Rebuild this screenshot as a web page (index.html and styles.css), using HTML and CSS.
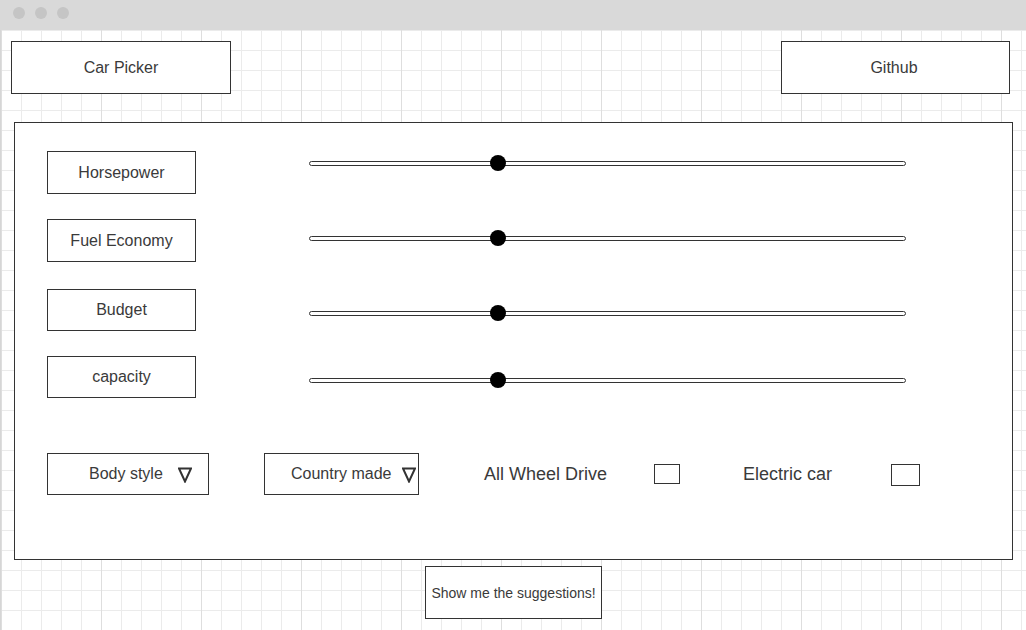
FILE: index.html
```html
<!DOCTYPE html>
<html lang="en">
<head>
<meta charset="utf-8">
<title>Car Picker</title>
<link rel="stylesheet" href="styles.css">
</head>
<body>
<div class="titlebar">
  <span class="dot"></span><span class="dot"></span><span class="dot"></span>
</div>
<main class="canvas">
  <header class="header">
    <div class="box box--brand">Car Picker</div>
    <div class="box box--github">Github</div>
  </header>

  <section class="panel">
    <div class="row row--hp">
      <div class="label">Horsepower</div>
      <div class="slider"><div class="track"></div><div class="thumb"></div></div>
    </div>
    <div class="row row--fuel">
      <div class="label">Fuel Economy</div>
      <div class="slider"><div class="track"></div><div class="thumb"></div></div>
    </div>
    <div class="row row--budget">
      <div class="label">Budget</div>
      <div class="slider"><div class="track"></div><div class="thumb"></div></div>
    </div>
    <div class="row row--capacity">
      <div class="label">capacity</div>
      <div class="slider"><div class="track"></div><div class="thumb"></div></div>
    </div>

    <div class="options">
      <div class="dropdown dropdown--body">
        <span>Body style</span>
        <svg class="tri" width="14" height="16" viewBox="0 0 14 16"><polygon points="1,1.5 13,1.5 7,14.5" fill="none" stroke="#333" stroke-width="2" stroke-linejoin="miter"/></svg>
      </div>
      <div class="dropdown dropdown--country">
        <span>Country made</span>
        <svg class="tri" width="14" height="16" viewBox="0 0 14 16"><polygon points="1,1.5 13,1.5 7,14.5" fill="none" stroke="#333" stroke-width="2" stroke-linejoin="miter"/></svg>
      </div>
      <div class="check check--awd">
        <span class="check-label">All Wheel Drive</span>
        <span class="checkbox"></span>
      </div>
      <div class="check check--electric">
        <span class="check-label">Electric car</span>
        <span class="checkbox"></span>
      </div>
    </div>
  </section>

  <div class="actions">
    <div class="box box--submit">Show me the suggestions!</div>
  </div>
</main>
</body>
</html>
```

FILE: styles.css
```css
* { box-sizing: border-box; }

html, body {
  margin: 0;
  padding: 0;
  background: #fff;
}

body {
  width: 1026px;
  height: 630px;
  overflow: hidden;
  font-family: "Liberation Sans", Arial, sans-serif;
  color: #3a3a3a;
}

.titlebar {
  height: 30px;
  background: #d9d9d9;
  display: flex;
  align-items: center;
  gap: 10px;
  padding: 0 0 4px 13px;
}

.dot {
  width: 12px;
  height: 12px;
  border-radius: 50%;
  background: #c5c5c5;
}

.canvas {
  height: 600px;
  border-left: 1px solid #d6d6d6;
  padding: 11px 16px 0 10px;
  background-color: #fff;
  background-image:
    linear-gradient(to right, #dedede 1px, transparent 1px),
    linear-gradient(to right, #ebebeb 1px, transparent 1px),
    linear-gradient(to bottom, #ebebeb 1px, transparent 1px);
  background-size: 100px 100%, 20px 20px, 20px 20px;
  background-position: 0 0, 0 0, 0 0;
}

.header {
  display: flex;
  justify-content: space-between;
}

.box {
  display: flex;
  align-items: center;
  justify-content: center;
  border: 1px solid #333;
  background: #fff;
  font-size: 16px;
}

.box--brand { width: 220px; height: 53px; }
.box--github { width: 229px; height: 53px; padding-right: 3px; }

.panel {
  width: 999px;
  height: 438px;
  margin: 28px 0 0 3px;
  border: 1px solid #333;
  background: #fff;
  padding: 28px 32px 0;
}

.row {
  display: flex;
  align-items: flex-start;
}

.row--fuel { margin-top: 25px; }
.row--budget { margin-top: 27px; }
.row--capacity { margin-top: 25px; }

.label {
  width: 149px;
  height: 43px;
  border: 1px solid #333;
  display: flex;
  align-items: center;
  justify-content: center;
  font-size: 16px;
}

.row--budget .label,
.row--capacity .label { height: 42px; }

.slider {
  position: relative;
  width: 597px;
  height: 16px;
  margin-left: 113px;
  display: flex;
  align-items: center;
}

.row--hp .slider { margin-top: 4px; }
.row--fuel .slider { margin-top: 11px; }
.row--budget .slider { margin-top: 16px; }
.row--capacity .slider { margin-top: 16px; }

.track {
  width: 100%;
  height: 5px;
  border: 1px solid #333;
  border-radius: 3px;
  background: #fff;
}

.thumb {
  position: absolute;
  left: 181px;
  top: 0;
  width: 16px;
  height: 16px;
  border-radius: 50%;
  background: #000;
}

.options {
  display: flex;
  align-items: center;
  margin-top: 55px;
  height: 42px;
}

.dropdown {
  height: 42px;
  border: 1px solid #333;
  display: flex;
  align-items: center;
  font-size: 16px;
}

.dropdown--body {
  width: 162px;
  padding-left: 41px;
  gap: 15px;
}

.dropdown--country {
  width: 155px;
  margin-left: 55px;
  padding-left: 26px;
  gap: 10px;
}

.tri { flex: none; margin-top: 1px; }

.check {
  display: flex;
  align-items: center;
  font-size: 18px;
}

.check--awd { margin-left: 65px; }
.check--awd .check-label { width: 170px; }
.check--electric { margin-left: 63px; }
.check--electric .check-label { width: 148px; }

.checkbox {
  display: block;
  border: 1px solid #333;
  background: #fff;
}

.check--awd .checkbox { width: 26px; height: 20px; }
.check--electric .checkbox { width: 29px; height: 22px; margin-top: 1px; }

.actions {
  display: flex;
  justify-content: center;
  margin-top: 6px;
  padding-left: 6px;
}

.box--submit {
  width: 177px;
  height: 53px;
  font-size: 14px;
}
```
